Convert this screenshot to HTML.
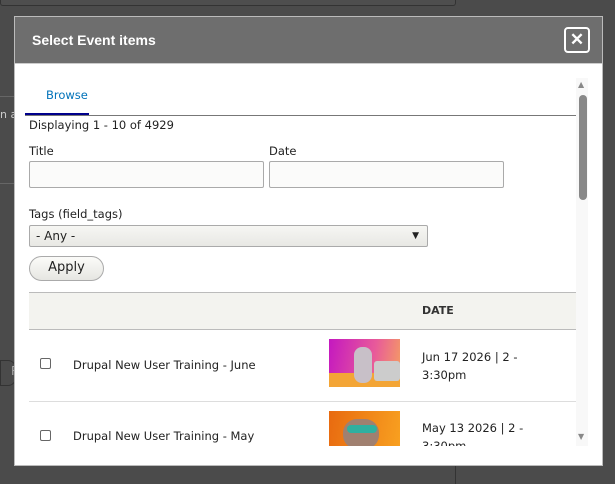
<!DOCTYPE html>
<html><head><style>
*{box-sizing:border-box;margin:0;padding:0}
body{width:615px;height:484px;background:#4b4b4b;position:relative;overflow:hidden;font-family:"DejaVu Sans","Liberation Sans",sans-serif;font-size:12px;color:#222}
.a{position:absolute}
</style></head><body>
<div class="a" style="left:0;top:0;width:456px;height:6px;border:1px solid #333;border-top:none;border-radius:0 0 3px 3px;background:#4e4e4e"></div>
<div class="a" style="left:0;top:96px;width:16px;height:1px;background:#666"></div>
<div class="a" style="left:0;top:108px;font-size:11px;color:#ccc">n a</div>
<div class="a" style="left:0;top:183px;width:16px;height:1px;background:#666"></div>
<div class="a" style="left:0;top:360px;width:16px;height:26px;border:1px solid #333;border-radius:0 8px 8px 0;color:#aaa;padding:3px 0 0 10px">R</div>
<div class="a" style="left:455px;top:465px;width:1px;height:19px;background:#333"></div>
<div class="a" style="left:14px;top:16px;width:589px;height:450px;background:#fff;border:1px solid #bbb"></div>
<div class="a" style="left:15px;top:17px;width:587px;height:47px;background:#6e6e6e;border-bottom:1px solid #ccc"></div>
<div class="a" style="left:32px;top:32px;color:#fff;font-family:'Liberation Sans',sans-serif;font-weight:bold;font-size:14px">Select Event items</div>
<div class="a" style="left:564px;top:27px;width:26px;height:26px;border:2px solid #fff;border-radius:4px;color:#fff;font-family:'Liberation Sans',sans-serif;font-weight:bold;font-size:17px;text-align:center;line-height:21px">✕</div>
<div class="a" style="left:46px;top:88px;color:#0072b9;font-size:11.5px">Browse</div>
<div class="a" style="left:25px;top:113px;width:64px;height:3px;background:#00008b"></div>
<div class="a" style="left:25px;top:115px;width:551px;height:1px;background:#777"></div>
<div class="a" style="left:29px;top:118px;font-size:11.5px">Displaying 1 - 10 of 4929</div>
<div class="a" style="left:29px;top:144px;font-size:11.5px">Title</div>
<div class="a" style="left:269px;top:144px;font-size:11.5px">Date</div>
<div class="a" style="left:29px;top:161px;width:235px;height:27px;border:1px solid #aaa;background:#fbfbfa;border-radius:2px"></div>
<div class="a" style="left:269px;top:161px;width:235px;height:27px;border:1px solid #aaa;background:#fbfbfa;border-radius:2px"></div>
<div class="a" style="left:29px;top:207px;font-size:11.5px">Tags (field_tags)</div>
<div class="a" style="left:29px;top:225px;width:399px;height:22px;border:1px solid #aaa;background:linear-gradient(#f6f6f3,#e8e8e4);border-radius:2px;padding:3px 0 0 6px;font-size:12px">- Any -<span class="a" style="right:8px;top:5px;font-size:9px">▼</span></div>
<div class="a" style="left:29px;top:256px;width:75px;height:25px;border:1px solid #aaa;background:linear-gradient(#fbfbf9,#e6e6e2);border-radius:13px;text-align:center;line-height:22px;font-size:13px">Apply</div>
<div class="a" style="left:29px;top:292px;width:547px;height:38px;background:#f3f3ef;border-top:1px solid #bbb;border-bottom:1px solid #bbb"></div>
<div class="a" style="left:422px;top:304px;font-size:11px;font-weight:bold;color:#333">DATE</div>
<div class="a" style="left:40px;top:358px;width:11px;height:11px;border:1px solid #666;border-radius:2px"></div>
<div class="a" style="left:73px;top:358px;font-size:11.5px">Drupal New User Training - June</div>
<div class="a" style="left:329px;top:339px;width:71px;height:48px;background:linear-gradient(100deg,#c418c0,#e85a9a 60%,#f5a060);overflow:hidden"><div class="a" style="left:0;bottom:0;width:71px;height:14px;background:#f3a536"></div><div class="a" style="left:25px;top:8px;width:18px;height:36px;background:#c8c0c8;border-radius:8px"></div><div class="a" style="left:45px;top:22px;width:26px;height:20px;background:#ccc;border-radius:3px"></div></div>
<div class="a" style="left:422px;top:348px;font-size:11.5px;line-height:18px">Jun 17 2026 | 2 -<br>3:30pm</div>
<div class="a" style="left:29px;top:401px;width:547px;height:1px;background:#ddd"></div>
<div class="a" style="left:40px;top:430px;width:11px;height:11px;border:1px solid #666;border-radius:2px"></div>
<div class="a" style="left:73px;top:429px;font-size:11.5px">Drupal New User Training - May</div>
<div class="a" style="left:329px;top:411px;width:71px;height:35px;background:linear-gradient(100deg,#e86a10,#f8a020);overflow:hidden"><div class="a" style="left:14px;top:8px;width:36px;height:30px;background:#a08070;border-radius:14px"></div><div class="a" style="left:18px;top:14px;width:30px;height:8px;background:#30b0a0;border-radius:4px"></div></div>
<div class="a" style="left:422px;top:419px;font-size:11.5px;line-height:18px;height:27px;overflow:hidden">May 13 2026 | 2 -<br>3:30pm</div>
<div class="a" style="left:576px;top:78px;width:12px;height:368px;background:#f8f8f8"></div>
<div class="a" style="left:578px;top:80px;font-size:8px;color:#888">▲</div>
<div class="a" style="left:579px;top:95px;width:8px;height:105px;background:#888;border-radius:4px"></div>
<div class="a" style="left:578px;top:432px;font-size:8px;color:#888">▼</div>
</body></html>
